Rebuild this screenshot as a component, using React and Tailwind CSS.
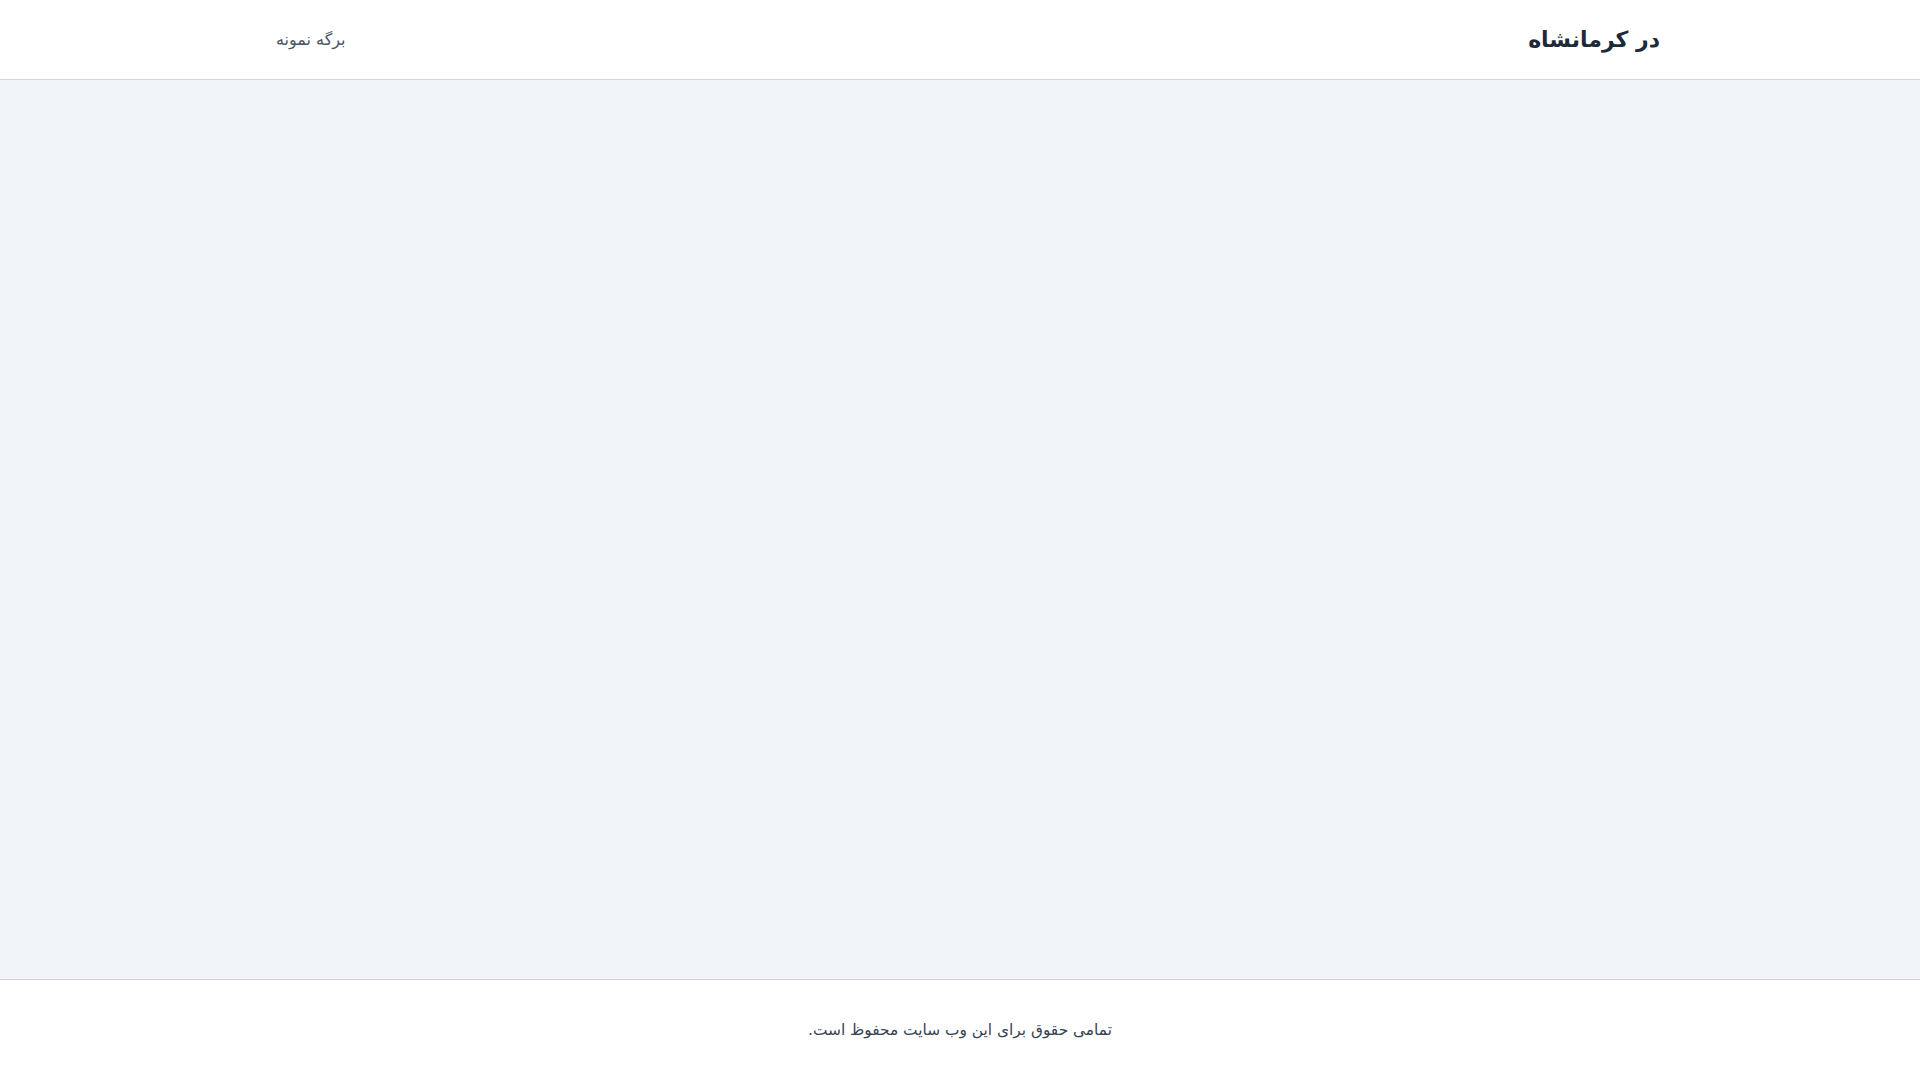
export default function App() {
  return (
    <div
      dir="rtl"
      className="min-h-screen flex flex-col bg-white"
      style={{ fontFamily: '"DejaVu Sans", "Noto Sans", sans-serif' }}
    >
      <header className="h-20 border-b border-gray-300 bg-white">
        <div className="max-w-[1400px] mx-auto h-full flex items-center justify-between">
          <h1 className="text-[22px] font-bold text-gray-800">در کرمانشاه</h1>
          <nav>
            <a href="#" className="px-4 text-base text-gray-600">
              برگه نمونه
            </a>
          </nav>
        </div>
      </header>

      <main className="flex-1 bg-slate-100"></main>

      <footer className="border-t border-gray-300 bg-white py-[38px]">
        <p className="text-center text-[15.4px] leading-6 text-gray-700">
          تمامی حقوق برای این وب سایت محفوظ است.
        </p>
      </footer>
    </div>
  );
}
